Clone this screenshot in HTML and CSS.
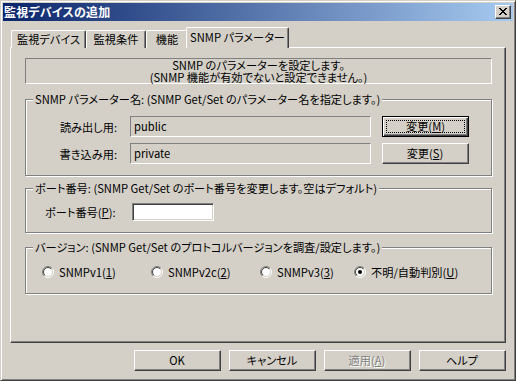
FILE: index.html
```html
<!DOCTYPE html>
<html lang="ja">
<head>
<meta charset="utf-8">
<title>監視デバイスの追加</title>
<link rel="stylesheet" href="styles.css">
</head>
<body>
<div class="window">
  <div class="titlebar">
    <span class="title">監視デバイスの追加</span>
    <span class="close-btn">
      <svg width="8" height="7" viewBox="0 0 8 7"><path d="M0 0h2v1h1v1h2v-1h1v-1h2v1h-1v1h-1v1h-1v1h1v1h1v1h1v1h-2v-1h-1v-1h-2v1h-1v1h-2v-1h1v-1h1v-1h1v-1h-1v-1h-1v-1h-1z" fill="#000"/></svg>
    </span>
  </div>
  <div class="client">
    <div class="tabs">
      <div class="tab t1">監視デバイス</div>
      <div class="tab t2">監視条件</div>
      <div class="tab t3">機能</div>
      <div class="tab active">SNMP パラメーター</div>
    </div>
    <div class="panel">
      <div class="info">
        <div class="info-line">SNMP のパラメーターを設定します。</div>
        <div class="info-line">(SNMP 機能が有効でないと設定できません。)</div>
      </div>

      <div class="group g1">
        <div class="legend">SNMP パラメーター名: (SNMP Get/Set のパラメーター名を指定します。)</div>
        <div class="param-grid">
          <div class="plabel">読み出し用:</div>
          <div class="field ro">public</div>
          <div class="btn default"><span class="focus">変更(<u>M</u>)</span></div>
          <div class="plabel">書き込み用:</div>
          <div class="field ro">private</div>
          <div class="btn"><span>変更(<u>S</u>)</span></div>
        </div>
      </div>

      <div class="group g2">
        <div class="legend">ポート番号: (SNMP Get/Set のポート番号を変更します。空はデフォルト)</div>
        <div class="port-row">
          <div class="port-label">ポート番号(<u>P</u>):</div>
          <div class="field edit"></div>
        </div>
      </div>

      <div class="group g3">
        <div class="legend">バージョン: (SNMP Get/Set のプロトコルバージョンを調査/設定します。)</div>
        <div class="radio-row">
          <div class="radio r1"><svg class="rb" width="12" height="12" viewBox="0 0 12 12"><use href="#radio"/></svg><span>SNMPv1(<u>1</u>)</span></div>
          <div class="radio r2"><svg class="rb" width="12" height="12" viewBox="0 0 12 12"><use href="#radio"/></svg><span>SNMPv2c(<u>2</u>)</span></div>
          <div class="radio r3"><svg class="rb" width="12" height="12" viewBox="0 0 12 12"><use href="#radio"/></svg><span>SNMPv3(<u>3</u>)</span></div>
          <div class="radio r4"><svg class="rb" width="12" height="12" viewBox="0 0 12 12"><use href="#radio"/><circle cx="6" cy="6" r="2" fill="#000"/></svg><span>不明/自動判別(<u>U</u>)</span></div>
        </div>
      </div>
    </div>
    <div class="buttons">
      <div class="btn wide">OK</div>
      <div class="btn wide">キャンセル</div>
      <div class="btn wide disabled">適用(<u>A</u>)</div>
      <div class="btn wide">ヘルプ</div>
    </div>
  </div>
</div>
<svg width="0" height="0" class="defs">
  <defs>
    <linearGradient id="outerg" x1="0" y1="0" x2="1" y2="1">
      <stop offset="0.5" stop-color="#808080"/>
      <stop offset="0.5" stop-color="#ffffff"/>
    </linearGradient>
    <linearGradient id="innerg" x1="0" y1="0" x2="1" y2="1">
      <stop offset="0.5" stop-color="#404040"/>
      <stop offset="0.5" stop-color="#d4d0c8"/>
    </linearGradient>
    <g id="radio">
      <circle cx="6" cy="6" r="5.5" fill="none" stroke="url(#outerg)" stroke-width="1"/>
      <circle cx="6" cy="6" r="4.5" fill="#ffffff" stroke="url(#innerg)" stroke-width="1"/>
    </g>
  </defs>
</svg>
</body>
</html>
```
FILE: styles.css
```css
* { box-sizing: border-box; }
html, body { margin: 0; padding: 0; background: #d4d0c8; }
body {
  font-family: "Noto Sans CJK JP", "Noto Sans", sans-serif;
  font-size: 11.2px;
  line-height: 12px;
  font-feature-settings: "palt";
  color: #000;
}
.defs { position: absolute; }
.window {
  width: 516px;
  height: 381px;
  background: #d4d0c8;
  border: 1px solid;
  border-color: #d4d0c8 #404040 #404040 #d4d0c8;
  box-shadow: inset 1px 1px #ffffff, inset -1px -1px #808080;
  padding: 2px;
  display: flex;
  flex-direction: column;
}
.titlebar {
  height: 18px;
  background: linear-gradient(to right, #0a246a, #a6caf0);
  display: flex;
  align-items: center;
  justify-content: space-between;
  padding: 0 2px 0 1px;
  flex: none;
}
.title {
  color: #fff;
  font-weight: bold;
  font-size: 12px;
  letter-spacing: 0.2px;
}
.close-btn {
  width: 16px;
  height: 14px;
  background: #d4d0c8;
  border: 1px solid;
  border-color: #ffffff #404040 #404040 #ffffff;
  box-shadow: inset -1px -1px #808080;
  display: flex;
  align-items: center;
  justify-content: center;
  padding: 0 1px 1px 0;
}
.close-btn svg { display: block; }
.client {
  flex: 1;
  margin-top: 1px;
  display: flex;
  flex-direction: column;
}
.tabs {
  display: flex;
  align-items: flex-end;
  height: 26px;
  padding-left: 8px;
  position: relative;
  z-index: 2;
  margin-bottom: -1px;
}
.tab {
  height: 18px;
  border-top: 1px solid #fff;
  border-left: 1px solid #fff;
  border-right: 1px solid #404040;
  box-shadow: inset -1px 0 #808080;
  border-radius: 2px 2px 0 0;
  display: flex;
  align-items: center;
  justify-content: center;
  background: #d4d0c8;
  padding-bottom: 1px;
  white-space: nowrap;
}
.t1 { width: 75px; }
.t2 { width: 60px; }
.t3 { width: 42px; }
.tab.active {
  width: 103px;
  height: 21px;
  margin-left: -2px;
  padding-bottom: 2px;
}
.panel {
  margin-left: 7px;
  width: 496px;
  height: 296px;
  border: 1px solid;
  border-color: #ffffff #404040 #404040 #ffffff;
  box-shadow: inset -1px -1px #808080;
  padding: 10px 13px 0 14px;
  display: flex;
  flex-direction: column;
}
.info {
  height: 26px;
  border: 1px solid;
  border-color: #808080 #ffffff #ffffff #808080;
  text-align: center;
  line-height: 12px;
}
.info-line { height: 12px; }
.group {
  border: 1px solid #808080;
  box-shadow: inset 1px 1px #ffffff, 1px 1px #ffffff;
  display: flex;
  flex-direction: column;
}
.legend {
  margin: -7px 0 0 7px;
  padding: 0 2px;
  background: #d4d0c8;
  width: fit-content;
  height: 12px;
  white-space: nowrap;
}
.g1 { margin-top: 15px; height: 77px; }
.g2 { margin-top: 12px; height: 45px; }
.g3 { margin-top: 14px; height: 47px; }
.param-grid {
  margin-top: 11px;
  display: grid;
  grid-template-columns: 104px 241px 98px;
  grid-auto-rows: 21px;
  row-gap: 6px;
}
.plabel {
  text-align: right;
  padding-right: 13px;
  align-self: center;
}
.param-grid .btn { margin-left: 11px; }
.field {
  display: flex;
  align-items: center;
}
.field.ro {
  border: 1px solid;
  border-color: #808080 #ffffff #ffffff #808080;
  padding: 0 0 1px 3px;
}
.field.edit {
  width: 82px;
  height: 18px;
  background: #fff;
  border: 1px solid;
  border-color: #808080 #ffffff #ffffff #808080;
  box-shadow: inset 1px 1px #404040, inset -1px -1px #d4d0c8;
}
.btn {
  background: #d4d0c8;
  border: 1px solid;
  border-color: #ffffff #404040 #404040 #ffffff;
  box-shadow: inset -1px -1px #808080;
  display: flex;
  align-items: center;
  justify-content: center;
  padding: 0 1px 1px 0;
  white-space: nowrap;
}
.btn.default {
  border: 1px solid #000;
  box-shadow: inset 1px 1px #ffffff, inset -1px -1px #404040, inset -2px -2px #808080;
  padding: 3px;
}
.focus {
  flex: 1;
  align-self: stretch;
  border: 1px dotted #000;
  display: flex;
  align-items: center;
  justify-content: center;
  padding-bottom: 1px;
}
.port-row {
  margin-top: 9px;
  display: flex;
  align-items: center;
  padding-left: 19px;
}
.port-label { margin-right: 8px; width: 79px; white-space: nowrap; }
.radio-row {
  margin-top: 12px;
  display: flex;
  align-items: center;
  height: 14px;
  padding-left: 16px;
}
.radio {
  display: flex;
  align-items: center;
  white-space: nowrap;
}
.radio .rb { flex: none; margin-right: 5px; display: block; }
.r1, .r2 { width: 109px; }
.r3 { width: 94px; }
.buttons {
  margin-top: 7px;
  display: flex;
  justify-content: flex-end;
  gap: 8px;
  padding-right: 7px;
}
.btn.wide {
  width: 87px;
  height: 21px;
}
.btn.disabled {
  color: #808080;
  text-shadow: 1px 1px #ffffff;
}
u { text-decoration: underline; text-underline-offset: 1px; }
```
